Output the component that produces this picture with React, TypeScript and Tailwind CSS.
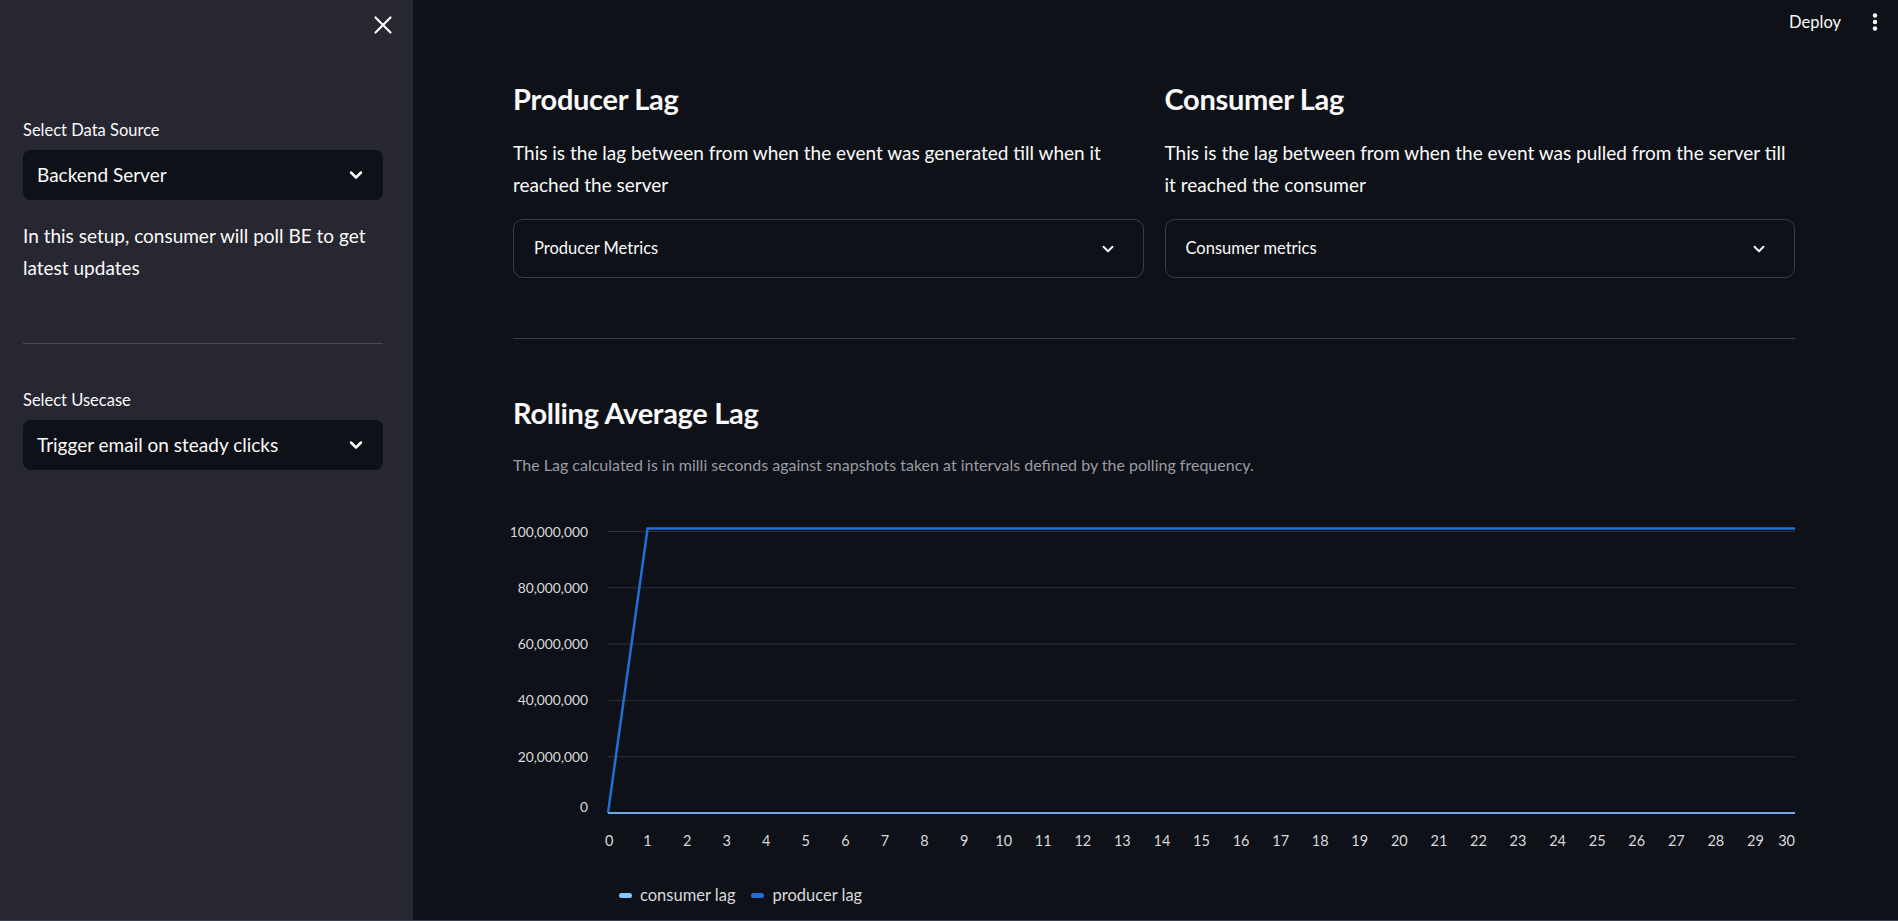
import { ChevronDown, X } from 'lucide-react'

const font = { fontFamily: 'Lato, "Noto Sans", sans-serif' }

const yTicks = ['100,000,000', '80,000,000', '60,000,000', '40,000,000', '20,000,000', '0']

function Select({ value }: { value: string }) {
  return (
    <div className="flex h-[50px] items-center justify-between rounded-lg bg-[#0e1117] pl-[14px] pr-[17px] text-[19px] text-[#fafafa]">
      <span>{value}</span>
      <ChevronDown className="size-5" strokeWidth={3} />
    </div>
  )
}

function Expander({ label }: { label: string }) {
  return (
    <div className="flex h-[59px] items-center justify-between rounded-[10px] border border-[#3a3d45] pl-5 pr-[26px] text-[16.5px] text-[#fafafa]">
      <span>{label}</span>
      <ChevronDown className="size-[18px]" strokeWidth={2.5} />
    </div>
  )
}

function LagColumn({ title, text, label }: { title: string; text: string; label: string }) {
  return (
    <div className="flex flex-col">
      <h3 className="h-9 text-[29px] font-bold leading-9 tracking-[-0.3px] text-[#fafafa]">{title}</h3>
      <p className="mt-5 text-[19px] leading-[31.5px] text-[#fafafa]">{text}</p>
      <div className="mt-[19px]">
        <Expander label={label} />
      </div>
    </div>
  )
}

function LagChart() {
  const W = 1282
  const x0 = 95
  const step = (W - x0) / 30
  const top = 30.5
  const zero = 312
  const gy = (i: number) => top + ((zero - top) / 5) * i

  return (
    <svg width={W} height={360} className="block overflow-visible" style={font}>
      {yTicks.map((t, i) => (
        <g key={t}>
          {i < 5 && <line x1={x0} x2={W} y1={gy(i)} y2={gy(i)} stroke="#2d2f37" strokeWidth={1} />}
          <text
            x={75}
            y={i < 5 ? gy(i) + 5 : 311}
            textAnchor="end"
            fill="#d8d9dc"
            fontSize={13.8}
          >
            {t}
          </text>
        </g>
      ))}
      {Array.from({ length: 31 }, (_, i) => (
        <text
          key={i}
          x={i === 0 ? x0 - 3 : i === 30 ? W : x0 + i * step}
          y={345}
          textAnchor={i === 0 ? 'start' : i === 30 ? 'end' : 'middle'}
          fill="#d8d9dc"
          fontSize={14.5}
        >
          {i}
        </text>
      ))}
      <polyline
        points={`${x0},${zero} ${x0 + step},27.5 ${W},27.5`}
        fill="none"
        stroke="#1f6fd6"
        strokeWidth={2.5}
      />
      <line x1={x0} x2={W} y1={zero} y2={zero} stroke="#6fa9e6" strokeWidth={2} />
    </svg>
  )
}

export default function App() {
  return (
    <div className="flex h-[921px] w-full overflow-hidden border-b border-[#3a4252] bg-[#0e1117]" style={font}>
      <aside className="flex w-[413px] shrink-0 flex-col bg-[#262730] pl-[23px] pr-[30px]">
        <div className="flex justify-end pt-[10px]">
          <X className="-mr-[15px] size-[30px] text-[#fafafa]" strokeWidth={1.7} />
        </div>
        <label className="mt-[78px] text-[16.5px] leading-6 text-[#fafafa]">Select Data Source</label>
        <div className="mt-[8px]">
          <Select value="Backend Server" />
        </div>
        <p className="mt-[20px] text-[19px] leading-8 text-[#fafafa]">
          In this setup, consumer will poll BE to get latest updates
        </p>
        <hr className="mt-[59px] border-t border-[#4a4b55]" />
        <label className="mt-[44px] text-[16.5px] leading-6 text-[#fafafa]">Select Usecase</label>
        <div className="mt-[8px]">
          <Select value="Trigger email on steady clicks" />
        </div>
      </aside>

      <main className="relative flex-1">
        <div className="absolute right-[20px] top-[10px] flex items-center gap-[31px] text-[16.5px] text-[#fafafa]">
          <span>Deploy</span>
          <svg width="6" height="20" viewBox="0 0 6 20" fill="#fafafa">
            <circle cx="3" cy="3.5" r="2.2" />
            <circle cx="3" cy="10" r="2.2" />
            <circle cx="3" cy="16.5" r="2.2" />
          </svg>
        </div>

        <div className="pl-[100px] pr-[103px] pt-[81px]">
          <div className="grid grid-cols-2 gap-[21px]">
            <LagColumn
              title="Producer Lag"
              text="This is the lag between from when the event was generated till when it reached the server"
              label="Producer Metrics"
            />
            <LagColumn
              title="Consumer Lag"
              text="This is the lag between from when the event was pulled from the server till it reached the consumer"
              label="Consumer metrics"
            />
          </div>

          <hr className="mt-[60px] border-t border-[#3b3d45]" />

          <h3 className="mt-[56px] h-9 text-[29px] font-bold leading-9 tracking-[-0.3px] text-[#fafafa]">
            Rolling Average Lag
          </h3>
          <p className="mt-[20px] text-[16px] leading-7 text-[#9a9ca3]">
            The Lag calculated is in milli seconds against snapshots taken at intervals defined by the polling frequency.
          </p>

          <div className="mt-[22px]">
            <LagChart />
          </div>

          <div className="mt-[22px] flex items-center gap-[8px] pl-[106px] text-[16.5px] text-[#d8d9dc]">
            <span className="h-[5px] w-[13px] rounded-sm bg-[#83c9ff]" />
            <span>consumer lag</span>
            <span className="ml-[8px] h-[5px] w-[13px] rounded-sm bg-[#1f6fd6]" />
            <span>producer lag</span>
          </div>
        </div>
      </main>
    </div>
  )
}
